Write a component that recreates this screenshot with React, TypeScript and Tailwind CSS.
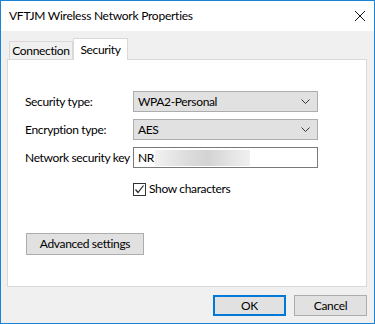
import React, { useState } from 'react';

const Chevron: React.FC = () => (
  <svg width="9" height="5" viewBox="0 0 9 5" className="shrink-0">
    <path d="M0.5 0.5 L4.5 4.5 L8.5 0.5" fill="none" stroke="#333" strokeWidth="1" />
  </svg>
);

const Dropdown: React.FC<{ value: string }> = ({ value }) => (
  <div className="w-[185px] h-[21px] border border-[#adadad] bg-[#e1e1e1] flex items-center justify-between pl-[4px] pr-[7px]">
    <span>{value}</span>
    <Chevron />
  </div>
);

const Row: React.FC<{ label: string; children: React.ReactNode }> = ({ label, children }) => (
  <div className="flex items-center">
    <div className="w-[108px] shrink-0 whitespace-nowrap">{label}</div>
    {children}
  </div>
);

const App: React.FC = () => {
  const [showChars, setShowChars] = useState(true);

  return (
    <div className="w-[375px] h-[324px] border border-[#1883d7] bg-[#f0f0f0] flex flex-col text-[12px] tracking-[-0.35px] text-black font-['Lato','Noto_Sans',sans-serif] select-none">
      {/* title bar */}
      <div className="h-[30px] bg-white flex items-center justify-between pl-[8px] pr-[9px] shrink-0">
        <span className="text-[12px] tracking-[-0.25px]">VFTJM Wireless Network Properties</span>
        <svg width="10" height="10" viewBox="0 0 10 10">
          <path d="M0 0 L10 10 M10 0 L0 10" stroke="#111" strokeWidth="1" />
        </svg>
      </div>

      <div className="flex-1 flex flex-col pl-[6px] pr-[7px] pt-[7px]">
        {/* tabs */}
        <div className="flex items-end h-[21px] pl-[2px] relative z-10">
          <div className="h-[18px] w-[64px] border border-b-0 border-[#d9d9d9] bg-[#f0f0f0] flex items-center justify-center whitespace-nowrap">
            Connection
          </div>
          <div className="h-[22px] w-[55px] border border-b-0 border-[#d9d9d9] bg-white -mb-[1px] flex items-start justify-center pt-[2px]">
            Security
          </div>
        </div>

        {/* panel */}
        <div className="h-[228px] border border-[#d9d9d9] bg-white pl-[17px] pt-[31px] flex flex-col">
          <div className="flex flex-col gap-[7px]">
            <Row label="Security type:">
              <Dropdown value="WPA2-Personal" />
            </Row>
            <Row label="Encryption type:">
              <Dropdown value="AES" />
            </Row>
            <Row label="Network security key">
              <div className="w-[185px] h-[21px] border border-[#7a7a7a] bg-white flex items-center pl-[4px]">
                <span>NR</span>
                <div className="ml-[1px] w-[95px] h-[16px] bg-[linear-gradient(90deg,#f2f2f2,#dcdcdc_35%,#d3d3d3_55%,#e4e4e4_80%,#f0f0f0)]" />
              </div>
            </Row>
          </div>

          <label className="flex items-center mt-[12px] ml-[108px] w-fit">
            <button
              onClick={() => setShowChars(!showChars)}
              className="w-[13px] h-[13px] border border-[#333] bg-white flex items-center justify-center"
            >
              {showChars && (
                <svg width="11" height="11" viewBox="0 0 11 11">
                  <path d="M1.5 5.5 L4 8.5 L9.5 1.5" fill="none" stroke="#222" strokeWidth="1.2" />
                </svg>
              )}
            </button>
            <span className="ml-[3px]">Show characters</span>
          </label>

          <button className="mt-[35px] ml-[1px] w-[118px] h-[22px] border border-[#adadad] bg-[#e1e1e1] flex items-center justify-center">
            Advanced settings
          </button>
        </div>

        {/* bottom buttons */}
        <div className="flex justify-end gap-[8px] mt-[8px]">
          <button className="w-[73px] h-[21px] border-2 border-[#0078d7] bg-[#e1e1e1] flex items-center justify-center">
            OK
          </button>
          <button className="w-[73px] h-[21px] border border-[#adadad] bg-[#e1e1e1] flex items-center justify-center">
            Cancel
          </button>
        </div>
      </div>
    </div>
  );
};

export default App;
